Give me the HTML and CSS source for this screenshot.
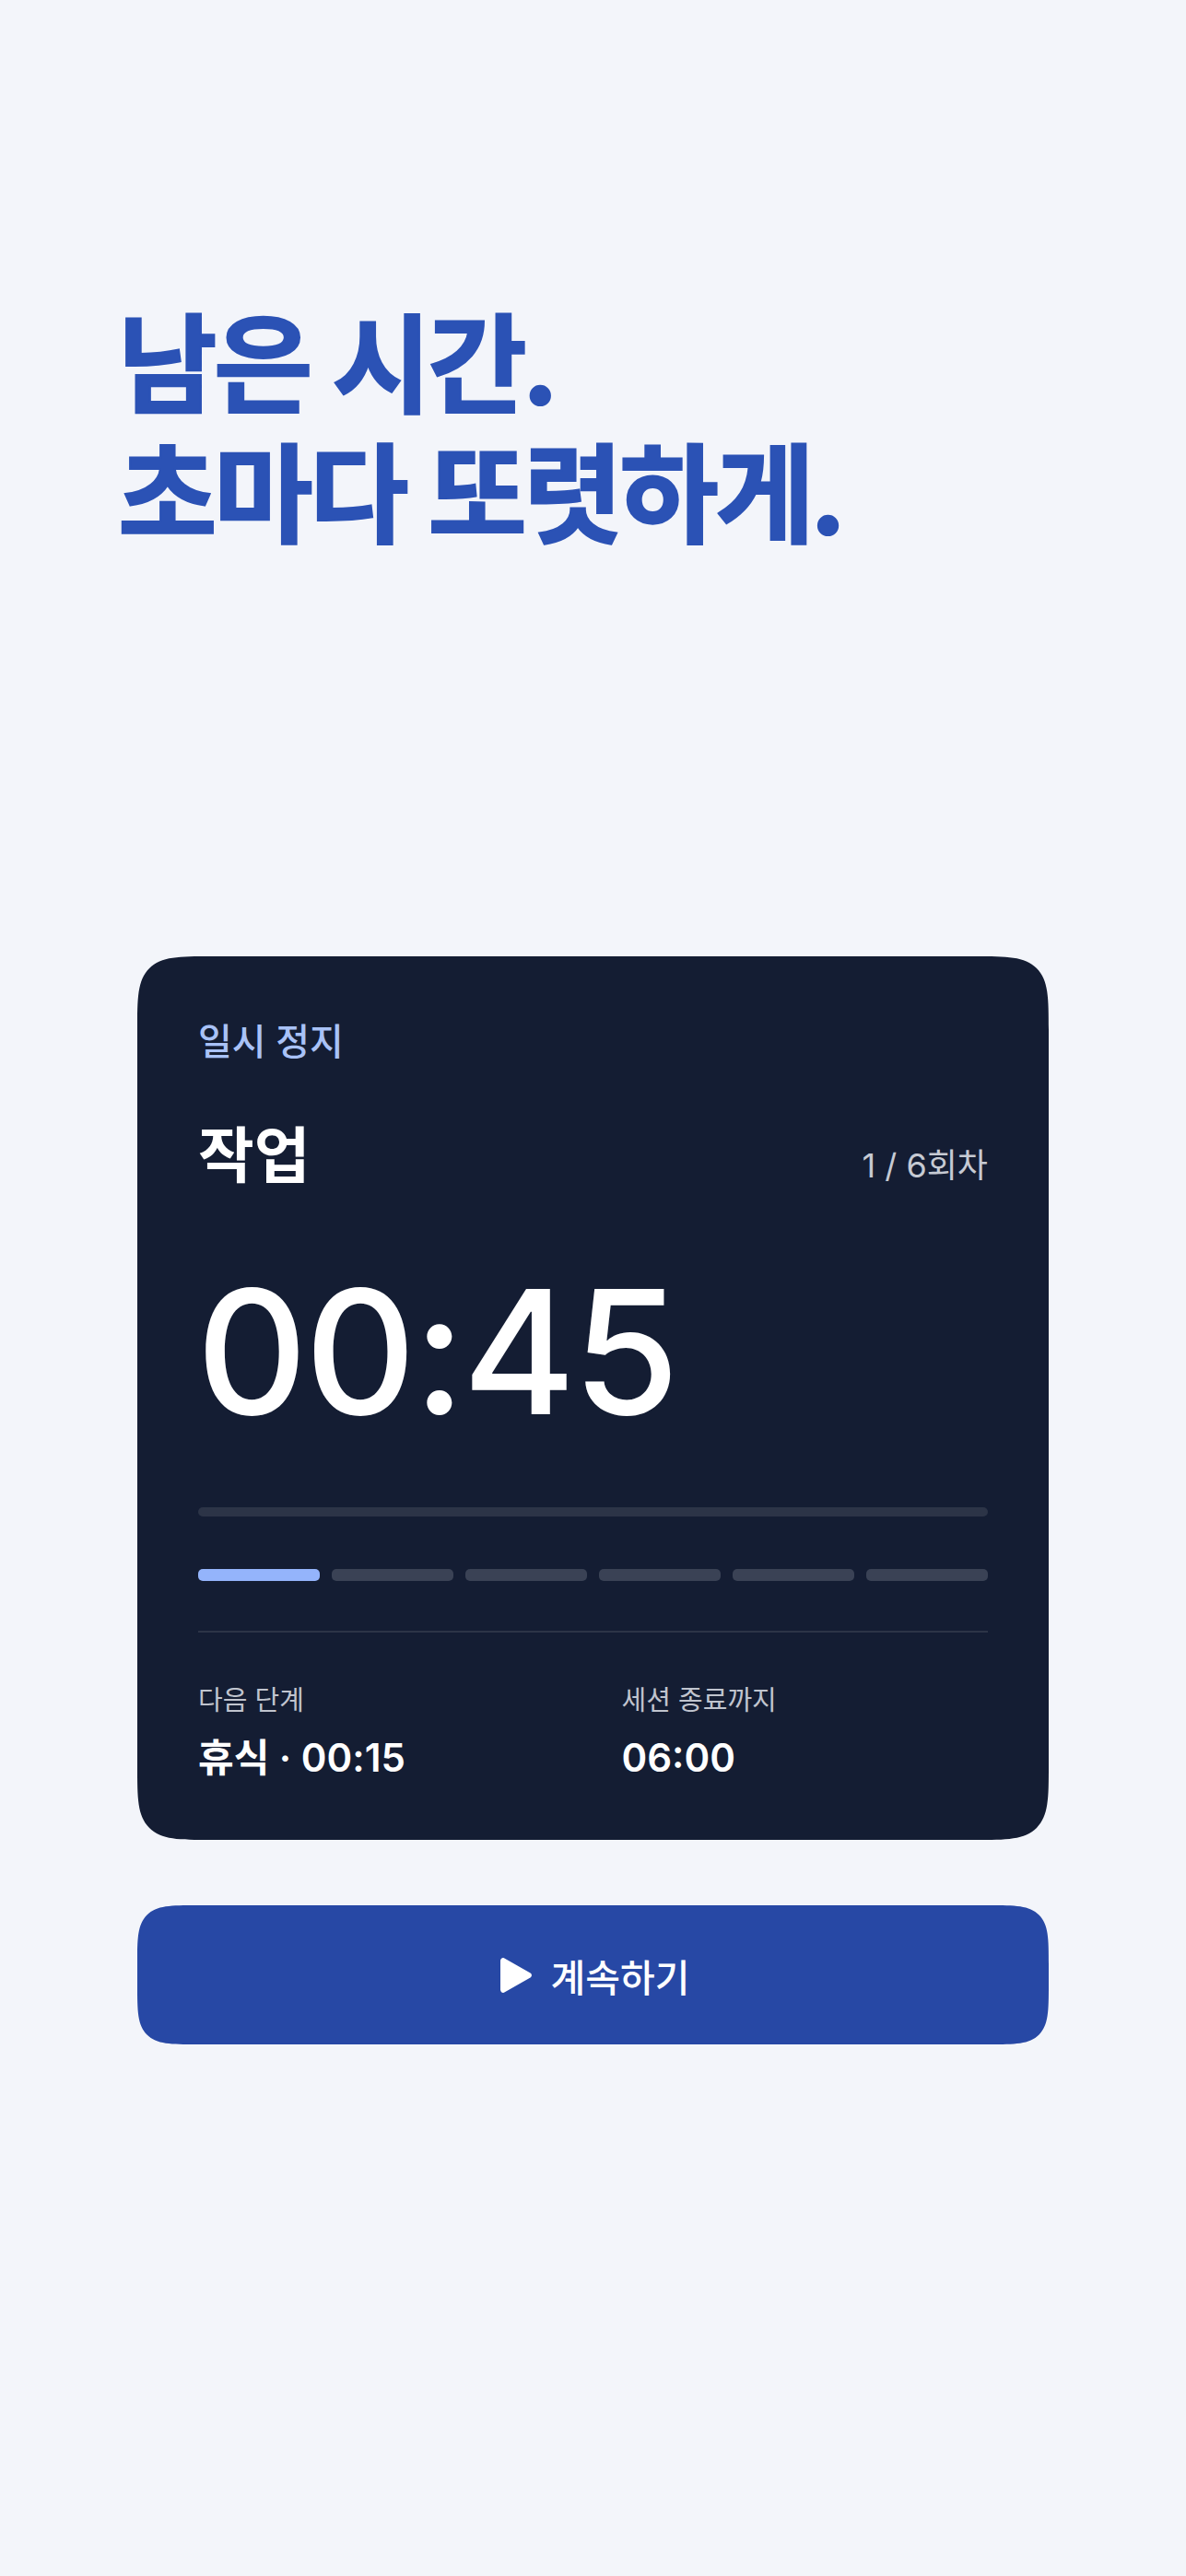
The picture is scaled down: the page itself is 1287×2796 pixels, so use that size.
FILE: index.html
```html
<!DOCTYPE html>
<html lang="ko">
<head>
    <meta charset="UTF-8">
    <meta name="viewport" content="width=device-width, initial-scale=1.0">
    <title>타이머</title>
    <link rel="stylesheet" href="styles.css">
</head>
<body>
    <main class="screen">
        <h1 class="headline">남은 시간<span class="stop">.</span><br>초마다 또렷하게<span class="stop">.</span></h1>

        <section class="timer-card">
            <div class="status">일시 정지</div>
            <div class="phase-row">
                <div class="phase">작업</div>
                <div class="round">1 / 6회차</div>
            </div>
            <div class="clock">00:45</div>
            <div class="track"></div>
            <div class="segments">
                <span class="segment active"></span>
                <span class="segment"></span>
                <span class="segment"></span>
                <span class="segment"></span>
                <span class="segment"></span>
                <span class="segment"></span>
            </div>
            <div class="info">
                <div>
                    <div class="info-label">다음 단계</div>
                    <div class="info-value">휴식 · 00:15</div>
                </div>
                <div>
                    <div class="info-label">세션 종료까지</div>
                    <div class="info-value">06:00</div>
                </div>
            </div>
        </section>

        <button class="resume" type="button">
            <svg class="resume-icon" viewBox="0 0 34 38" width="34" height="38" aria-hidden="true">
                <path d="M0 3.5C0 .8 2.6-.8 4.800.7L32.500 16.600c1.900 1.200 1.900 3.600 0 4.800L4.800 37.300C2.600 38.800 0 37.200 0 34.500z" fill="#fff"/>
            </svg>
            <span>계속하기</span>
        </button>
    </main>
</body>
</html>
```

FILE: styles.css
```css
body {
    margin: 0;
    background-color: #f3f5fa;
    font-family: Inter, "Noto Sans CJK KR", sans-serif;
}
.screen {
    display: flex;
    flex-direction: column;
    min-height: 2796px;
    box-sizing: border-box;
    padding: 326px 149px 0;
}
.headline {
    margin: 0 0 0 -21px;
    font-size: 117px;
    line-height: 141px;
    font-weight: 700;
    letter-spacing: -3.6px;
    color: #2b52b5;
    -webkit-text-stroke: 2px #2b52b5;
}
.stop {
    margin-left: -3px;
    font-size: 126px;
    line-height: 0;
}
.timer-card {
    margin-top: 430px;
    height: 959px;
    box-sizing: border-box;
    padding: 65px 66px 0;
    border-radius: 82px;
    corner-shape: squircle;
    background-color: #141d33;
}
.status {
    font-size: 40px;
    line-height: 56px;
    font-weight: 500;
    color: #a9c2f7;
}
.phase-row {
    display: flex;
    justify-content: space-between;
    align-items: flex-end;
    margin-top: 55px;
}
.phase {
    font-size: 66px;
    line-height: 80px;
    font-weight: 600;
    color: #fff;
}
.round {
    margin-bottom: 4px;
    font-size: 36px;
    line-height: 50px;
    color: #c6cad3;
}
.clock {
    margin: 58px 0 0 -2px;
    font-size: 187px;
    line-height: 230px;
    font-weight: 500;
    letter-spacing: -3px;
    color: #fff;
}
.track {
    margin-top: 54px;
    height: 10px;
    border-radius: 5px;
    background-color: #2c3447;
}
.segments {
    display: flex;
    gap: 13px;
    margin-top: 57px;
}
.segment {
    flex: 1;
    height: 13px;
    border-radius: 5px;
    background-color: #3a4255;
}
.segment.active {
    background-color: #94b4fb;
}
.info {
    display: grid;
    grid-template-columns: 1fr 1fr;
    gap: 62px;
    margin-top: 54px;
    padding-top: 52px;
    border-top: 2px solid #2c3447;
}
.info-label {
    font-size: 29px;
    line-height: 44px;
    color: #c0c4ce;
}
.info-value {
    margin-top: 12px;
    font-size: 42px;
    line-height: 56px;
    font-weight: 600;
    color: #fff;
}
.resume {
    display: flex;
    justify-content: center;
    align-items: center;
    gap: 21px;
    height: 151px;
    margin-top: 71px;
    padding-left: 10px;
    border: none;
    border-radius: 66px;
    corner-shape: squircle;
    background-color: #2748a5;
    color: #fff;
    font-family: inherit;
    font-size: 41px;
    font-weight: 500;
}
```
